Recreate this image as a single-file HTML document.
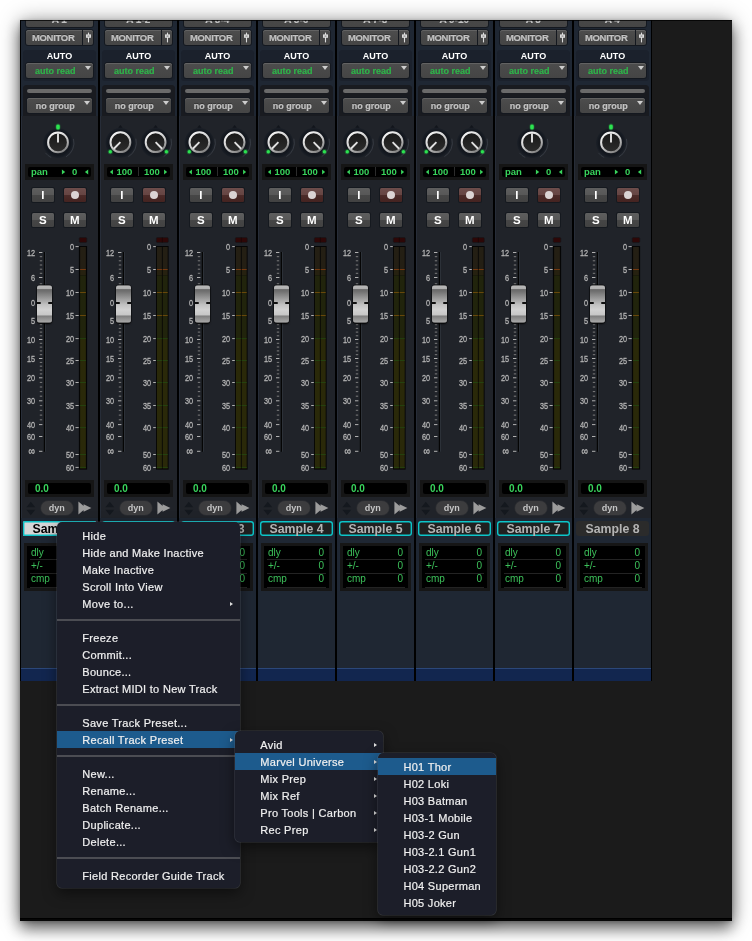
<!DOCTYPE html><html><head><meta charset="utf-8"><title>Mixer</title><style>

*{box-sizing:border-box;margin:0;padding:0}
html,body{width:752px;height:941px;background:#fff;overflow:hidden}
body{position:relative;font-family:"Liberation Sans",sans-serif;}
#panel{position:absolute;left:20px;top:20px;width:712px;height:901px;background:#1b1b1b;will-change:transform;
 box-shadow:0 1px 4px rgba(0,0,0,.2),0 0 20px rgba(0,0,0,.35),0 8px 14px rgba(0,0,0,.5);}
#panel .botline{position:absolute;left:0;right:0;bottom:0;height:3px;background:#060606;border-top:1px solid #000}
#clip{position:absolute;left:0;top:0;width:712px;height:901px;overflow:hidden}
.strip{position:absolute;top:0;width:79px;height:661px;background:#1f2733;}
.np{position:absolute;left:1px;top:96px;width:78px;height:401.5px;background:#202329;box-shadow:inset 1px 0 0 #272d38}
.strip .dv{position:absolute;left:-1px;top:0;width:2px;height:661px;background:#000;z-index:3}
.strip .bl{position:absolute;left:0;top:648px;width:79px;height:13px;background:#12264f;border-top:1px solid #2b4779}
.a{position:absolute}
.btn{position:absolute;background:linear-gradient(#4d4d4d,#484848 50%,#454545 100%);border-radius:2.5px;
 color:#c2c2c2;font-weight:bold;font-size:9px;text-align:center;white-space:nowrap;
 box-shadow:0 0 0 1px #14181f,inset 0 1px 0 #626262;text-shadow:0 -1px 0 rgba(0,0,0,.35);-webkit-text-stroke:.2px currentColor}
.sec{position:absolute;left:3.2px;width:72.6px;background:#1b212c;border-radius:3.5px}
.tri{position:absolute;width:0;height:0;border-left:3.1px solid transparent;border-right:3.1px solid transparent;border-top:4.1px solid #cdcdcd}
.disp{position:absolute;left:5px;width:69px;background:#151515;}
.disp i{position:absolute;left:3px;top:3px;right:3px;bottom:3px;background:#000;border-radius:2px;display:block}
.sq{position:absolute;width:22.7px;height:14.5px;border-radius:1.5px;background:linear-gradient(#5e5e5e 0,#585858 48%,#464646 52%,#424242 100%);
 box-shadow:0 0 0 1px #15191f;color:#fff;font-weight:bold;font-size:11.5px;text-align:center;line-height:14.6px}
.sq.rec{background:linear-gradient(#6d4d4b 0,#664543 48%,#4b2b29 52%,#452320 100%)}
.sq.rec b{position:absolute;left:7.4px;top:3px;width:8.2px;height:8.2px;border-radius:50%;background:#dbd4d4;display:block}
.lab{position:absolute;color:#b4b4b4;font-size:9.6px;line-height:10px;width:24px;white-space:nowrap;transform-origin:100% 50%;transform:scaleX(.76);text-align:right;-webkit-text-stroke:.3px #b4b4b4}
.name{position:absolute;left:3px;top:501px;width:73px;height:15px;box-shadow:inset 0 0 0 1.4px #0cc5c9;border-radius:3px;background:#202020;color:#b4b4b4;font-weight:bold;font-size:12.3px;line-height:16.6px;text-align:center;white-space:nowrap;overflow:hidden}
.dly{position:absolute;left:4px;top:523px;width:71px;height:48px;background:#161616}
.dly i{position:absolute;left:3px;top:3px;width:65px;height:42px;background:#000;display:block}
.dly span{position:absolute;font-size:10px;line-height:11px;color:#3cc05a}
.dly u{position:absolute;left:6px;width:59px;height:1px;background:#232323;display:block}
.menu{position:absolute;background:#1c1e29;border-radius:5px;box-shadow:0 0 0 .6px rgba(130,135,150,.3),0 5px 14px rgba(0,0,0,.5);color:#f0f0f0;font-size:11px;letter-spacing:.3px;-webkit-text-stroke:.2px #f0f0f0;z-index:10;padding:5px 0 4px;overflow:hidden}
.menu div{height:17px;line-height:18.6px;white-space:nowrap;position:relative}
.menu div.hl{background:#1d5b8d}
.menu div.sp:after{content:"";position:absolute;left:0;right:0;top:7px;height:2px;background:#4c4d53}
.menu div.ar:after{content:"";position:absolute;top:6.7px;width:0;height:0;border-top:2px solid transparent;border-bottom:2px solid transparent;border-left:3.5px solid #ddd}
.m1 div.ar:after{right:7px}.m2 div.ar:after{right:6.5px}
.gr{color:#38d45c;font-weight:bold;position:absolute;white-space:nowrap}

</style></head><body>
<svg width="0" height="0" style="position:absolute"><defs><radialGradient id="halo"><stop offset="0" stop-color="#10141a"/><stop offset="0.8" stop-color="#13171e"/><stop offset="0.93" stop-color="#181d25" stop-opacity=".8"/><stop offset="1" stop-color="#202329" stop-opacity="0"/></radialGradient><linearGradient id="kb" x1="0" y1="0" x2="0" y2="1"><stop offset="0" stop-color="#181818"/><stop offset="1" stop-color="#2c2c2c"/></linearGradient><linearGradient id="kr" x1="0.2" y1="0" x2="0.8" y2="1"><stop offset="0" stop-color="#f6f6f6"/><stop offset="0.55" stop-color="#c8c8c8"/><stop offset="1" stop-color="#7c7c7c"/></linearGradient></defs></svg>
<div id="panel"><div id="clip">
<div class="strip" style="left:0px"><div class="dv"></div>
<div class="btn" style="left:5.5px;top:-8px;width:67.5px;height:15px;line-height:16px;font-size:10px">A 1</div>
<div class="btn" style="left:5.5px;top:10px;width:57px;height:15px;line-height:15.2px;font-size:9.5px;letter-spacing:-.3px;padding-right:1.6px;border-radius:2.5px 0 0 2.5px">MONITOR</div>
<div class="btn" style="left:63px;top:10px;width:10px;height:15px;border-radius:0 2.5px 2.5px 0"><svg class="a" style="left:1.5px;top:2px" width="7" height="11" viewBox="0 0 7 11"><path d="M3.5 .6V10.4" stroke="#dcdcdc" stroke-width="1.1"/><rect x="1" y="2.4" width="5" height="3.4" fill="#dcdcdc"/><path d="M2.5 4.1H4.5" stroke="#555" stroke-width=".7"/></svg></div>
<div class="sec" style="top:30px;height:31px"></div>
<div class="a" style="left:0;top:30.6px;width:79px;text-align:center;color:#fff;font-weight:bold;font-size:9px;line-height:11px">AUTO</div>
<div class="btn" style="left:5.5px;top:43px;width:67.5px;height:15px;line-height:16.2px;padding-right:8px;color:#2fb34a;text-shadow:none">auto read<span class="tri" style="left:59.4px;top:3px"></span></div>
<div class="np"></div><div class="sec" style="top:65px;height:31px;background:#191b20;border-radius:3.5px 3.5px 0 0"></div>
<div class="a" style="left:7px;top:69px;width:65px;height:4px;border-radius:2px;background:#6a6a6a"></div>
<div class="btn" style="left:7px;top:78.2px;width:65px;height:15px;line-height:16.6px;padding-right:8.5px">no group<span class="tri" style="left:56.8px;top:3.1px"></span></div>
<svg class="a" style="left:0;top:100px" width="79" height="44" viewBox="0 100 79 44"><circle cx="38" cy="123.0" r="15.6" fill="url(#halo)"/><path d="M35.8 108.0L38 105.2L40.2 108.0Z" fill="#11151b"/><path d="M53.45 118.86A16 16 0 0 1 46.00 136.86" fill="none" stroke="#3b4049" stroke-width="1" opacity=".8"/><path d="M31.24 137.50A16 16 0 0 1 25.39 132.85" fill="none" stroke="#3b4049" stroke-width="1" opacity=".7"/><circle cx="38" cy="122.4" r="9.9" fill="url(#kb)" stroke="url(#kr)" stroke-width="2"/><line x1="38" y1="122.4" x2="38.00" y2="113.20" stroke="#e2e2e2" stroke-width="1.9"/><rect x="35.4" y="103.6" width="5.2" height="6.8" rx="2.4" fill="#25e04a" opacity=".25"/><rect x="36.2" y="104.4" width="3.6" height="5.2" rx="1.7" fill="#2ce350"/></svg>
<div class="disp" style="top:144px;height:16px"><i></i></div>
<div class="gr" style="left:11px;font-size:9.5px;line-height:11px;top:145.8px">pan</div><div class="gr" style="left:52px;font-size:9.5px;line-height:11px;top:145.8px">0</div>
<svg class="a" style="left:40px;top:148.5px" width="30" height="6"><path d="M5.2 3L1.9 .5V5.5Z M24.9 3L28.2 .5V5.5Z" fill="#38d45c"/></svg>
<div class="sq" style="left:11.5px;top:167.8px">I</div><div class="sq rec" style="left:43.5px;top:167.8px"><b></b></div>
<div class="sq" style="left:11.5px;top:192.8px">S</div><div class="sq" style="left:43.5px;top:192.8px">M</div>
<div class="lab" style="left:-8.8px;top:227.8px">12</div>
<div class="lab" style="left:-8.8px;top:252.8px">6</div>
<div class="lab" style="left:-8.8px;top:277.8px">0</div>
<div class="lab" style="left:-8.8px;top:296.3px">5</div>
<div class="lab" style="left:-8.8px;top:314.8px">10</div>
<div class="lab" style="left:-8.8px;top:333.8px">15</div>
<div class="lab" style="left:-8.8px;top:353.1px">20</div>
<div class="lab" style="left:-8.8px;top:376.1px">30</div>
<div class="lab" style="left:-8.8px;top:399.90000000000003px">40</div>
<div class="lab" style="left:-8.8px;top:411.8px">60</div>
<div class="lab" style="left:-8.8px;top:426px;font-size:12px">∞</div>
<div class="lab" style="left:30.200000000000003px;top:221.9px">0</div>
<div class="lab" style="left:30.200000000000003px;top:244.8px">5</div>
<div class="lab" style="left:30.200000000000003px;top:267.8px">10</div>
<div class="lab" style="left:30.200000000000003px;top:290.8px">15</div>
<div class="lab" style="left:30.200000000000003px;top:313.90000000000003px">20</div>
<div class="lab" style="left:30.200000000000003px;top:335.8px">25</div>
<div class="lab" style="left:30.200000000000003px;top:357.8px">30</div>
<div class="lab" style="left:30.200000000000003px;top:380.8px">35</div>
<div class="lab" style="left:30.200000000000003px;top:402.90000000000003px">40</div>
<div class="lab" style="left:30.200000000000003px;top:429.8px">50</div>
<div class="lab" style="left:30.200000000000003px;top:442.7px">60</div>
<svg class="a" style="left:0;top:214px" width="79" height="240" viewBox="0 214 79 240"><path d="M19 232.5h3.4M19 257.5h3.4M19 282.5h3.4M19 301h3.4M19 319.5h3.4M19 338.5h3.4M19 357.8h3.4M19 380.8h3.4M19 404.6h3.4M19 416.5h3.4M19 431.3h3.4M55.5 226.6H58.8M55.5 249.5H58.8M55.5 272.5H58.8M55.5 295.5H58.8M55.5 318.6H58.8M55.5 340.5H58.8M55.5 362.5H58.8M55.5 385.5H58.8M55.5 407.6H58.8M55.5 434.5H58.8M55.5 447.4H58.8" stroke="#b0b0b0" stroke-width="1"/><path d="M19.8 236.7h2.4M19.8 240.8h2.4M19.8 245.0h2.4M19.8 249.2h2.4M19.8 253.3h2.4M19.8 263.8h2.4M19.8 270.0h2.4M19.8 276.2h2.4M19.8 287.1h2.4M19.8 291.8h2.4M19.8 296.4h2.4M19.8 304.7h2.4M19.8 308.4h2.4M19.8 312.1h2.4M19.8 315.8h2.4M19.8 323.3h2.4M19.8 327.1h2.4M19.8 330.9h2.4M19.8 334.7h2.4M19.8 342.4h2.4M19.8 346.2h2.4M19.8 350.1h2.4M19.8 353.9h2.4M19.8 362.4h2.4M19.8 367.0h2.4M19.8 371.6h2.4M19.8 376.2h2.4M19.8 385.6h2.4M19.8 390.3h2.4M19.8 395.1h2.4M19.8 399.8h2.4" stroke="#7d7d7d" stroke-width="1"/><rect x="23.8" y="232" width="1.4" height="199.7" fill="#050505"/><rect x="25.2" y="232" width=".6" height="199.7" fill="#3a4048"/><rect x="59.2" y="217.5" width="7.6" height="5" rx="1.3" fill="#2d0707" stroke="#14161a" stroke-width=".6"/><rect x="58.900000000000006" y="226" width="8.2" height="223.6" fill="#050505"/><rect x="60.1" y="227" width="5.8" height="23" fill="#241f14"/><rect x="60.1" y="250" width="5.8" height="5.5" fill="#262110"/><rect x="60.1" y="255.5" width="5.8" height="63" fill="#21240c"/><rect x="60.1" y="318.5" width="5.8" height="130" fill="#2a2909"/><path d="M60.1 249.5h5.8" stroke="#74380f" stroke-width="1"/><path d="M60.1 272.5h5.8M60.1 295.5h5.8" stroke="#68470a" stroke-width="1"/><path d="M60.1 318.6h5.8M60.1 340.5h5.8M60.1 362.5h5.8M60.1 385.5h5.8M60.1 407.6h5.8M60.1 434.5h5.8M60.1 447.4h5.8" stroke="#24420f" stroke-width="1"/></svg>
<div class="a" style="left:16.6px;top:264.5px;width:15.6px;height:38.7px;border-radius:3px;background:linear-gradient(#3a3a3a 0,#b8b8b8 3%,#b0b0b0 10%,#727272 11.5%,#6c6c6c 15%,#a6a6a6 40%,#b2b2b2 46%,#c2c2c2 52%,#d2d2d2 65%,#c6c6c6 79.5%,#7c7c7c 81%,#8a8a8a 86%,#a4a4a4 96.5%,#444 100%);box-shadow:0 1px 2px rgba(0,0,0,.8),0 0 0 .6px rgba(0,0,0,.55)"><div class="a" style="left:0;top:17px;width:4.6px;height:2px;background:#101010;border-radius:0 1px 1px 0"></div><div class="a" style="right:0;top:17px;width:4.6px;height:2px;background:#101010;border-radius:1px 0 0 1px"></div></div>
<div class="disp" style="top:460px;height:17px"><i></i></div>
<div class="gr" style="left:15px;top:463px;font-size:10px;line-height:11px">0.0</div>
<svg class="a" style="left:5.5px;top:481px" width="10" height="15"><path d="M4.8 .8L9.2 6.2H.4Z M4.8 14.2L9.2 8.8H.4Z" fill="#14181e"/></svg>
<div class="a" style="left:20.5px;top:481px;width:32.5px;height:13.5px;border-radius:7px;background:#3c3c3e;box-shadow:0 0 0 .7px #2a2c30;color:#c6c6c6;font-weight:bold;font-size:9px;line-height:14px;text-align:center">dyn</div>
<svg class="a" style="left:57.5px;top:481px" width="14" height="14"><path d="M.4 .4L8 7L.4 13.6Z M5.6 3.2L13.4 7L5.6 10.8Z" fill="#9c9c9c"/></svg>
<div class="name" style="background:#d6d6d6;color:#000;border-radius:1.5px">Sample 1</div>
<div class="dly"><i></i><span style="left:7px;top:3.7px">dly</span><span style="right:8px;top:3.7px">0</span><u style="top:15.5px"></u><span style="left:7px;top:16.7px">+/-</span><span style="right:8px;top:16.7px">0</span><u style="top:29.5px"></u><span style="left:7px;top:29.7px">cmp</span><span style="right:8px;top:29.7px">0</span><u style="top:43.5px"></u></div>
<div class="bl"></div></div>
<div class="strip" style="left:79px"><div class="dv"></div>
<div class="btn" style="left:5.5px;top:-8px;width:67.5px;height:15px;line-height:16px;font-size:10px">A 1-2</div>
<div class="btn" style="left:5.5px;top:10px;width:57px;height:15px;line-height:15.2px;font-size:9.5px;letter-spacing:-.3px;padding-right:1.6px;border-radius:2.5px 0 0 2.5px">MONITOR</div>
<div class="btn" style="left:63px;top:10px;width:10px;height:15px;border-radius:0 2.5px 2.5px 0"><svg class="a" style="left:1.5px;top:2px" width="7" height="11" viewBox="0 0 7 11"><path d="M3.5 .6V10.4" stroke="#dcdcdc" stroke-width="1.1"/><rect x="1" y="2.4" width="5" height="3.4" fill="#dcdcdc"/><path d="M2.5 4.1H4.5" stroke="#555" stroke-width=".7"/></svg></div>
<div class="sec" style="top:30px;height:31px"></div>
<div class="a" style="left:0;top:30.6px;width:79px;text-align:center;color:#fff;font-weight:bold;font-size:9px;line-height:11px">AUTO</div>
<div class="btn" style="left:5.5px;top:43px;width:67.5px;height:15px;line-height:16.2px;padding-right:8px;color:#2fb34a;text-shadow:none">auto read<span class="tri" style="left:59.4px;top:3px"></span></div>
<div class="np"></div><div class="sec" style="top:65px;height:31px;background:#191b20;border-radius:3.5px 3.5px 0 0"></div>
<div class="a" style="left:7px;top:69px;width:65px;height:4px;border-radius:2px;background:#6a6a6a"></div>
<div class="btn" style="left:7px;top:78.2px;width:65px;height:15px;line-height:16.6px;padding-right:8.5px">no group<span class="tri" style="left:56.8px;top:3.1px"></span></div>
<svg class="a" style="left:0;top:100px" width="79" height="44" viewBox="0 100 79 44"><circle cx="21.4" cy="122.8" r="15.6" fill="url(#halo)"/><path d="M19.2 107.8L21.4 105.0L23.599999999999998 107.8Z" fill="#11151b"/><path d="M36.85 118.66A16 16 0 0 1 29.40 136.66" fill="none" stroke="#3b4049" stroke-width="1" opacity=".8"/><circle cx="21.4" cy="122.2" r="9.9" fill="url(#kb)" stroke="url(#kr)" stroke-width="2"/><line x1="21.4" y1="122.2" x2="14.89" y2="128.71" stroke="#e2e2e2" stroke-width="1.9"/><circle cx="56.6" cy="122.8" r="15.6" fill="url(#halo)"/><path d="M54.4 107.8L56.6 105.0L58.800000000000004 107.8Z" fill="#11151b"/><path d="M72.05 118.66A16 16 0 0 1 64.60 136.66" fill="none" stroke="#3b4049" stroke-width="1" opacity=".8"/><circle cx="56.6" cy="122.2" r="9.9" fill="url(#kb)" stroke="url(#kr)" stroke-width="2"/><line x1="56.6" y1="122.2" x2="63.11" y2="128.71" stroke="#e2e2e2" stroke-width="1.9"/><circle cx="11.3" cy="131.7" r="2.6" fill="#25e04a" opacity=".25"/><circle cx="67.4" cy="131.7" r="2.6" fill="#25e04a" opacity=".25"/><circle cx="11.3" cy="131.7" r="1.7" fill="#2ce350"/><circle cx="67.4" cy="131.7" r="1.7" fill="#2ce350"/></svg>
<div class="disp" style="top:144px;height:16px"><i></i></div>
<div class="gr" style="left:17.5px;font-size:9.5px;line-height:11px;top:145.8px">100</div><div class="gr" style="left:45px;font-size:9.5px;line-height:11px;top:145.8px">100</div>
<div class="a" style="left:39px;top:147px;width:1px;height:9px;background:#2c2c2c"></div>
<svg class="a" style="left:10px;top:148.5px" width="60" height="6"><path d="M.9 3L3.9 .6V5.4Z M58.1 3L55.1 .6V5.4Z" fill="#38d45c"/></svg>
<div class="sq" style="left:11.5px;top:167.8px">I</div><div class="sq rec" style="left:43.5px;top:167.8px"><b></b></div>
<div class="sq" style="left:11.5px;top:192.8px">S</div><div class="sq" style="left:43.5px;top:192.8px">M</div>
<div class="lab" style="left:-8.8px;top:227.8px">12</div>
<div class="lab" style="left:-8.8px;top:252.8px">6</div>
<div class="lab" style="left:-8.8px;top:277.8px">0</div>
<div class="lab" style="left:-8.8px;top:296.3px">5</div>
<div class="lab" style="left:-8.8px;top:314.8px">10</div>
<div class="lab" style="left:-8.8px;top:333.8px">15</div>
<div class="lab" style="left:-8.8px;top:353.1px">20</div>
<div class="lab" style="left:-8.8px;top:376.1px">30</div>
<div class="lab" style="left:-8.8px;top:399.90000000000003px">40</div>
<div class="lab" style="left:-8.8px;top:411.8px">60</div>
<div class="lab" style="left:-8.8px;top:426px;font-size:12px">∞</div>
<div class="lab" style="left:28.200000000000003px;top:221.9px">0</div>
<div class="lab" style="left:28.200000000000003px;top:244.8px">5</div>
<div class="lab" style="left:28.200000000000003px;top:267.8px">10</div>
<div class="lab" style="left:28.200000000000003px;top:290.8px">15</div>
<div class="lab" style="left:28.200000000000003px;top:313.90000000000003px">20</div>
<div class="lab" style="left:28.200000000000003px;top:335.8px">25</div>
<div class="lab" style="left:28.200000000000003px;top:357.8px">30</div>
<div class="lab" style="left:28.200000000000003px;top:380.8px">35</div>
<div class="lab" style="left:28.200000000000003px;top:402.90000000000003px">40</div>
<div class="lab" style="left:28.200000000000003px;top:429.8px">50</div>
<div class="lab" style="left:28.200000000000003px;top:442.7px">60</div>
<svg class="a" style="left:0;top:214px" width="79" height="240" viewBox="0 214 79 240"><path d="M19 232.5h3.4M19 257.5h3.4M19 282.5h3.4M19 301h3.4M19 319.5h3.4M19 338.5h3.4M19 357.8h3.4M19 380.8h3.4M19 404.6h3.4M19 416.5h3.4M19 431.3h3.4M54.2 226.6H56.8M54.2 249.5H56.8M54.2 272.5H56.8M54.2 295.5H56.8M54.2 318.6H56.8M54.2 340.5H56.8M54.2 362.5H56.8M54.2 385.5H56.8M54.2 407.6H56.8M54.2 434.5H56.8M54.2 447.4H56.8" stroke="#b0b0b0" stroke-width="1"/><path d="M19.8 236.7h2.4M19.8 240.8h2.4M19.8 245.0h2.4M19.8 249.2h2.4M19.8 253.3h2.4M19.8 263.8h2.4M19.8 270.0h2.4M19.8 276.2h2.4M19.8 287.1h2.4M19.8 291.8h2.4M19.8 296.4h2.4M19.8 304.7h2.4M19.8 308.4h2.4M19.8 312.1h2.4M19.8 315.8h2.4M19.8 323.3h2.4M19.8 327.1h2.4M19.8 330.9h2.4M19.8 334.7h2.4M19.8 342.4h2.4M19.8 346.2h2.4M19.8 350.1h2.4M19.8 353.9h2.4M19.8 362.4h2.4M19.8 367.0h2.4M19.8 371.6h2.4M19.8 376.2h2.4M19.8 385.6h2.4M19.8 390.3h2.4M19.8 395.1h2.4M19.8 399.8h2.4" stroke="#7d7d7d" stroke-width="1"/><rect x="23.8" y="232" width="1.4" height="199.7" fill="#050505"/><rect x="25.2" y="232" width=".6" height="199.7" fill="#3a4048"/><rect x="57.3" y="217.5" width="12" height="5" rx="1.3" fill="#2d0707" stroke="#14161a" stroke-width=".6"/><rect x="62.9" y="217.5" width=".8" height="5" fill="#180606"/><rect x="57.0" y="226" width="12.6" height="223.6" fill="#050505"/><rect x="57.9" y="227" width="5.0" height="23" fill="#241f14"/><rect x="57.9" y="250" width="5.0" height="5.5" fill="#262110"/><rect x="57.9" y="255.5" width="5.0" height="63" fill="#21240c"/><rect x="57.9" y="318.5" width="5.0" height="130" fill="#2a2909"/><path d="M57.9 249.5h5.0" stroke="#74380f" stroke-width="1"/><path d="M57.9 272.5h5.0M57.9 295.5h5.0" stroke="#68470a" stroke-width="1"/><path d="M57.9 318.6h5.0M57.9 340.5h5.0M57.9 362.5h5.0M57.9 385.5h5.0M57.9 407.6h5.0M57.9 434.5h5.0M57.9 447.4h5.0" stroke="#24420f" stroke-width="1"/><rect x="63.699999999999996" y="227" width="5.0" height="23" fill="#241f14"/><rect x="63.699999999999996" y="250" width="5.0" height="5.5" fill="#262110"/><rect x="63.699999999999996" y="255.5" width="5.0" height="63" fill="#21240c"/><rect x="63.699999999999996" y="318.5" width="5.0" height="130" fill="#2a2909"/><path d="M63.699999999999996 249.5h5.0" stroke="#74380f" stroke-width="1"/><path d="M63.699999999999996 272.5h5.0M63.699999999999996 295.5h5.0" stroke="#68470a" stroke-width="1"/><path d="M63.699999999999996 318.6h5.0M63.699999999999996 340.5h5.0M63.699999999999996 362.5h5.0M63.699999999999996 385.5h5.0M63.699999999999996 407.6h5.0M63.699999999999996 434.5h5.0M63.699999999999996 447.4h5.0" stroke="#24420f" stroke-width="1"/></svg>
<div class="a" style="left:16.6px;top:264.5px;width:15.6px;height:38.7px;border-radius:3px;background:linear-gradient(#3a3a3a 0,#b8b8b8 3%,#b0b0b0 10%,#727272 11.5%,#6c6c6c 15%,#a6a6a6 40%,#b2b2b2 46%,#c2c2c2 52%,#d2d2d2 65%,#c6c6c6 79.5%,#7c7c7c 81%,#8a8a8a 86%,#a4a4a4 96.5%,#444 100%);box-shadow:0 1px 2px rgba(0,0,0,.8),0 0 0 .6px rgba(0,0,0,.55)"><div class="a" style="left:0;top:17px;width:4.6px;height:2px;background:#101010;border-radius:0 1px 1px 0"></div><div class="a" style="right:0;top:17px;width:4.6px;height:2px;background:#101010;border-radius:1px 0 0 1px"></div></div>
<div class="disp" style="top:460px;height:17px"><i></i></div>
<div class="gr" style="left:15px;top:463px;font-size:10px;line-height:11px">0.0</div>
<svg class="a" style="left:5.5px;top:481px" width="10" height="15"><path d="M4.8 .8L9.2 6.2H.4Z M4.8 14.2L9.2 8.8H.4Z" fill="#14181e"/></svg>
<div class="a" style="left:20.5px;top:481px;width:32.5px;height:13.5px;border-radius:7px;background:#3c3c3e;box-shadow:0 0 0 .7px #2a2c30;color:#c6c6c6;font-weight:bold;font-size:9px;line-height:14px;text-align:center">dyn</div>
<svg class="a" style="left:57.5px;top:481px" width="14" height="14"><path d="M.4 .4L8 7L.4 13.6Z M5.6 3.2L13.4 7L5.6 10.8Z" fill="#9c9c9c"/></svg>
<div class="name">Sample 2</div>
<div class="dly"><i></i><span style="left:7px;top:3.7px">dly</span><span style="right:8px;top:3.7px">0</span><u style="top:15.5px"></u><span style="left:7px;top:16.7px">+/-</span><span style="right:8px;top:16.7px">0</span><u style="top:29.5px"></u><span style="left:7px;top:29.7px">cmp</span><span style="right:8px;top:29.7px">0</span><u style="top:43.5px"></u></div>
<div class="bl"></div></div>
<div class="strip" style="left:158px"><div class="dv"></div>
<div class="btn" style="left:5.5px;top:-8px;width:67.5px;height:15px;line-height:16px;font-size:10px">A 3-4</div>
<div class="btn" style="left:5.5px;top:10px;width:57px;height:15px;line-height:15.2px;font-size:9.5px;letter-spacing:-.3px;padding-right:1.6px;border-radius:2.5px 0 0 2.5px">MONITOR</div>
<div class="btn" style="left:63px;top:10px;width:10px;height:15px;border-radius:0 2.5px 2.5px 0"><svg class="a" style="left:1.5px;top:2px" width="7" height="11" viewBox="0 0 7 11"><path d="M3.5 .6V10.4" stroke="#dcdcdc" stroke-width="1.1"/><rect x="1" y="2.4" width="5" height="3.4" fill="#dcdcdc"/><path d="M2.5 4.1H4.5" stroke="#555" stroke-width=".7"/></svg></div>
<div class="sec" style="top:30px;height:31px"></div>
<div class="a" style="left:0;top:30.6px;width:79px;text-align:center;color:#fff;font-weight:bold;font-size:9px;line-height:11px">AUTO</div>
<div class="btn" style="left:5.5px;top:43px;width:67.5px;height:15px;line-height:16.2px;padding-right:8px;color:#2fb34a;text-shadow:none">auto read<span class="tri" style="left:59.4px;top:3px"></span></div>
<div class="np"></div><div class="sec" style="top:65px;height:31px;background:#191b20;border-radius:3.5px 3.5px 0 0"></div>
<div class="a" style="left:7px;top:69px;width:65px;height:4px;border-radius:2px;background:#6a6a6a"></div>
<div class="btn" style="left:7px;top:78.2px;width:65px;height:15px;line-height:16.6px;padding-right:8.5px">no group<span class="tri" style="left:56.8px;top:3.1px"></span></div>
<svg class="a" style="left:0;top:100px" width="79" height="44" viewBox="0 100 79 44"><circle cx="21.4" cy="122.8" r="15.6" fill="url(#halo)"/><path d="M19.2 107.8L21.4 105.0L23.599999999999998 107.8Z" fill="#11151b"/><path d="M36.85 118.66A16 16 0 0 1 29.40 136.66" fill="none" stroke="#3b4049" stroke-width="1" opacity=".8"/><circle cx="21.4" cy="122.2" r="9.9" fill="url(#kb)" stroke="url(#kr)" stroke-width="2"/><line x1="21.4" y1="122.2" x2="14.89" y2="128.71" stroke="#e2e2e2" stroke-width="1.9"/><circle cx="56.6" cy="122.8" r="15.6" fill="url(#halo)"/><path d="M54.4 107.8L56.6 105.0L58.800000000000004 107.8Z" fill="#11151b"/><path d="M72.05 118.66A16 16 0 0 1 64.60 136.66" fill="none" stroke="#3b4049" stroke-width="1" opacity=".8"/><circle cx="56.6" cy="122.2" r="9.9" fill="url(#kb)" stroke="url(#kr)" stroke-width="2"/><line x1="56.6" y1="122.2" x2="63.11" y2="128.71" stroke="#e2e2e2" stroke-width="1.9"/><circle cx="11.3" cy="131.7" r="2.6" fill="#25e04a" opacity=".25"/><circle cx="67.4" cy="131.7" r="2.6" fill="#25e04a" opacity=".25"/><circle cx="11.3" cy="131.7" r="1.7" fill="#2ce350"/><circle cx="67.4" cy="131.7" r="1.7" fill="#2ce350"/></svg>
<div class="disp" style="top:144px;height:16px"><i></i></div>
<div class="gr" style="left:17.5px;font-size:9.5px;line-height:11px;top:145.8px">100</div><div class="gr" style="left:45px;font-size:9.5px;line-height:11px;top:145.8px">100</div>
<div class="a" style="left:39px;top:147px;width:1px;height:9px;background:#2c2c2c"></div>
<svg class="a" style="left:10px;top:148.5px" width="60" height="6"><path d="M.9 3L3.9 .6V5.4Z M58.1 3L55.1 .6V5.4Z" fill="#38d45c"/></svg>
<div class="sq" style="left:11.5px;top:167.8px">I</div><div class="sq rec" style="left:43.5px;top:167.8px"><b></b></div>
<div class="sq" style="left:11.5px;top:192.8px">S</div><div class="sq" style="left:43.5px;top:192.8px">M</div>
<div class="lab" style="left:-8.8px;top:227.8px">12</div>
<div class="lab" style="left:-8.8px;top:252.8px">6</div>
<div class="lab" style="left:-8.8px;top:277.8px">0</div>
<div class="lab" style="left:-8.8px;top:296.3px">5</div>
<div class="lab" style="left:-8.8px;top:314.8px">10</div>
<div class="lab" style="left:-8.8px;top:333.8px">15</div>
<div class="lab" style="left:-8.8px;top:353.1px">20</div>
<div class="lab" style="left:-8.8px;top:376.1px">30</div>
<div class="lab" style="left:-8.8px;top:399.90000000000003px">40</div>
<div class="lab" style="left:-8.8px;top:411.8px">60</div>
<div class="lab" style="left:-8.8px;top:426px;font-size:12px">∞</div>
<div class="lab" style="left:28.200000000000003px;top:221.9px">0</div>
<div class="lab" style="left:28.200000000000003px;top:244.8px">5</div>
<div class="lab" style="left:28.200000000000003px;top:267.8px">10</div>
<div class="lab" style="left:28.200000000000003px;top:290.8px">15</div>
<div class="lab" style="left:28.200000000000003px;top:313.90000000000003px">20</div>
<div class="lab" style="left:28.200000000000003px;top:335.8px">25</div>
<div class="lab" style="left:28.200000000000003px;top:357.8px">30</div>
<div class="lab" style="left:28.200000000000003px;top:380.8px">35</div>
<div class="lab" style="left:28.200000000000003px;top:402.90000000000003px">40</div>
<div class="lab" style="left:28.200000000000003px;top:429.8px">50</div>
<div class="lab" style="left:28.200000000000003px;top:442.7px">60</div>
<svg class="a" style="left:0;top:214px" width="79" height="240" viewBox="0 214 79 240"><path d="M19 232.5h3.4M19 257.5h3.4M19 282.5h3.4M19 301h3.4M19 319.5h3.4M19 338.5h3.4M19 357.8h3.4M19 380.8h3.4M19 404.6h3.4M19 416.5h3.4M19 431.3h3.4M54.2 226.6H56.8M54.2 249.5H56.8M54.2 272.5H56.8M54.2 295.5H56.8M54.2 318.6H56.8M54.2 340.5H56.8M54.2 362.5H56.8M54.2 385.5H56.8M54.2 407.6H56.8M54.2 434.5H56.8M54.2 447.4H56.8" stroke="#b0b0b0" stroke-width="1"/><path d="M19.8 236.7h2.4M19.8 240.8h2.4M19.8 245.0h2.4M19.8 249.2h2.4M19.8 253.3h2.4M19.8 263.8h2.4M19.8 270.0h2.4M19.8 276.2h2.4M19.8 287.1h2.4M19.8 291.8h2.4M19.8 296.4h2.4M19.8 304.7h2.4M19.8 308.4h2.4M19.8 312.1h2.4M19.8 315.8h2.4M19.8 323.3h2.4M19.8 327.1h2.4M19.8 330.9h2.4M19.8 334.7h2.4M19.8 342.4h2.4M19.8 346.2h2.4M19.8 350.1h2.4M19.8 353.9h2.4M19.8 362.4h2.4M19.8 367.0h2.4M19.8 371.6h2.4M19.8 376.2h2.4M19.8 385.6h2.4M19.8 390.3h2.4M19.8 395.1h2.4M19.8 399.8h2.4" stroke="#7d7d7d" stroke-width="1"/><rect x="23.8" y="232" width="1.4" height="199.7" fill="#050505"/><rect x="25.2" y="232" width=".6" height="199.7" fill="#3a4048"/><rect x="57.3" y="217.5" width="12" height="5" rx="1.3" fill="#2d0707" stroke="#14161a" stroke-width=".6"/><rect x="62.9" y="217.5" width=".8" height="5" fill="#180606"/><rect x="57.0" y="226" width="12.6" height="223.6" fill="#050505"/><rect x="57.9" y="227" width="5.0" height="23" fill="#241f14"/><rect x="57.9" y="250" width="5.0" height="5.5" fill="#262110"/><rect x="57.9" y="255.5" width="5.0" height="63" fill="#21240c"/><rect x="57.9" y="318.5" width="5.0" height="130" fill="#2a2909"/><path d="M57.9 249.5h5.0" stroke="#74380f" stroke-width="1"/><path d="M57.9 272.5h5.0M57.9 295.5h5.0" stroke="#68470a" stroke-width="1"/><path d="M57.9 318.6h5.0M57.9 340.5h5.0M57.9 362.5h5.0M57.9 385.5h5.0M57.9 407.6h5.0M57.9 434.5h5.0M57.9 447.4h5.0" stroke="#24420f" stroke-width="1"/><rect x="63.699999999999996" y="227" width="5.0" height="23" fill="#241f14"/><rect x="63.699999999999996" y="250" width="5.0" height="5.5" fill="#262110"/><rect x="63.699999999999996" y="255.5" width="5.0" height="63" fill="#21240c"/><rect x="63.699999999999996" y="318.5" width="5.0" height="130" fill="#2a2909"/><path d="M63.699999999999996 249.5h5.0" stroke="#74380f" stroke-width="1"/><path d="M63.699999999999996 272.5h5.0M63.699999999999996 295.5h5.0" stroke="#68470a" stroke-width="1"/><path d="M63.699999999999996 318.6h5.0M63.699999999999996 340.5h5.0M63.699999999999996 362.5h5.0M63.699999999999996 385.5h5.0M63.699999999999996 407.6h5.0M63.699999999999996 434.5h5.0M63.699999999999996 447.4h5.0" stroke="#24420f" stroke-width="1"/></svg>
<div class="a" style="left:16.6px;top:264.5px;width:15.6px;height:38.7px;border-radius:3px;background:linear-gradient(#3a3a3a 0,#b8b8b8 3%,#b0b0b0 10%,#727272 11.5%,#6c6c6c 15%,#a6a6a6 40%,#b2b2b2 46%,#c2c2c2 52%,#d2d2d2 65%,#c6c6c6 79.5%,#7c7c7c 81%,#8a8a8a 86%,#a4a4a4 96.5%,#444 100%);box-shadow:0 1px 2px rgba(0,0,0,.8),0 0 0 .6px rgba(0,0,0,.55)"><div class="a" style="left:0;top:17px;width:4.6px;height:2px;background:#101010;border-radius:0 1px 1px 0"></div><div class="a" style="right:0;top:17px;width:4.6px;height:2px;background:#101010;border-radius:1px 0 0 1px"></div></div>
<div class="disp" style="top:460px;height:17px"><i></i></div>
<div class="gr" style="left:15px;top:463px;font-size:10px;line-height:11px">0.0</div>
<svg class="a" style="left:5.5px;top:481px" width="10" height="15"><path d="M4.8 .8L9.2 6.2H.4Z M4.8 14.2L9.2 8.8H.4Z" fill="#14181e"/></svg>
<div class="a" style="left:20.5px;top:481px;width:32.5px;height:13.5px;border-radius:7px;background:#3c3c3e;box-shadow:0 0 0 .7px #2a2c30;color:#c6c6c6;font-weight:bold;font-size:9px;line-height:14px;text-align:center">dyn</div>
<svg class="a" style="left:57.5px;top:481px" width="14" height="14"><path d="M.4 .4L8 7L.4 13.6Z M5.6 3.2L13.4 7L5.6 10.8Z" fill="#9c9c9c"/></svg>
<div class="name">Sample 3</div>
<div class="dly"><i></i><span style="left:7px;top:3.7px">dly</span><span style="right:8px;top:3.7px">0</span><u style="top:15.5px"></u><span style="left:7px;top:16.7px">+/-</span><span style="right:8px;top:16.7px">0</span><u style="top:29.5px"></u><span style="left:7px;top:29.7px">cmp</span><span style="right:8px;top:29.7px">0</span><u style="top:43.5px"></u></div>
<div class="bl"></div></div>
<div class="strip" style="left:237px"><div class="dv"></div>
<div class="btn" style="left:5.5px;top:-8px;width:67.5px;height:15px;line-height:16px;font-size:10px">A 5-6</div>
<div class="btn" style="left:5.5px;top:10px;width:57px;height:15px;line-height:15.2px;font-size:9.5px;letter-spacing:-.3px;padding-right:1.6px;border-radius:2.5px 0 0 2.5px">MONITOR</div>
<div class="btn" style="left:63px;top:10px;width:10px;height:15px;border-radius:0 2.5px 2.5px 0"><svg class="a" style="left:1.5px;top:2px" width="7" height="11" viewBox="0 0 7 11"><path d="M3.5 .6V10.4" stroke="#dcdcdc" stroke-width="1.1"/><rect x="1" y="2.4" width="5" height="3.4" fill="#dcdcdc"/><path d="M2.5 4.1H4.5" stroke="#555" stroke-width=".7"/></svg></div>
<div class="sec" style="top:30px;height:31px"></div>
<div class="a" style="left:0;top:30.6px;width:79px;text-align:center;color:#fff;font-weight:bold;font-size:9px;line-height:11px">AUTO</div>
<div class="btn" style="left:5.5px;top:43px;width:67.5px;height:15px;line-height:16.2px;padding-right:8px;color:#2fb34a;text-shadow:none">auto read<span class="tri" style="left:59.4px;top:3px"></span></div>
<div class="np"></div><div class="sec" style="top:65px;height:31px;background:#191b20;border-radius:3.5px 3.5px 0 0"></div>
<div class="a" style="left:7px;top:69px;width:65px;height:4px;border-radius:2px;background:#6a6a6a"></div>
<div class="btn" style="left:7px;top:78.2px;width:65px;height:15px;line-height:16.6px;padding-right:8.5px">no group<span class="tri" style="left:56.8px;top:3.1px"></span></div>
<svg class="a" style="left:0;top:100px" width="79" height="44" viewBox="0 100 79 44"><circle cx="21.4" cy="122.8" r="15.6" fill="url(#halo)"/><path d="M19.2 107.8L21.4 105.0L23.599999999999998 107.8Z" fill="#11151b"/><path d="M36.85 118.66A16 16 0 0 1 29.40 136.66" fill="none" stroke="#3b4049" stroke-width="1" opacity=".8"/><circle cx="21.4" cy="122.2" r="9.9" fill="url(#kb)" stroke="url(#kr)" stroke-width="2"/><line x1="21.4" y1="122.2" x2="14.89" y2="128.71" stroke="#e2e2e2" stroke-width="1.9"/><circle cx="56.6" cy="122.8" r="15.6" fill="url(#halo)"/><path d="M54.4 107.8L56.6 105.0L58.800000000000004 107.8Z" fill="#11151b"/><path d="M72.05 118.66A16 16 0 0 1 64.60 136.66" fill="none" stroke="#3b4049" stroke-width="1" opacity=".8"/><circle cx="56.6" cy="122.2" r="9.9" fill="url(#kb)" stroke="url(#kr)" stroke-width="2"/><line x1="56.6" y1="122.2" x2="63.11" y2="128.71" stroke="#e2e2e2" stroke-width="1.9"/><circle cx="11.3" cy="131.7" r="2.6" fill="#25e04a" opacity=".25"/><circle cx="67.4" cy="131.7" r="2.6" fill="#25e04a" opacity=".25"/><circle cx="11.3" cy="131.7" r="1.7" fill="#2ce350"/><circle cx="67.4" cy="131.7" r="1.7" fill="#2ce350"/></svg>
<div class="disp" style="top:144px;height:16px"><i></i></div>
<div class="gr" style="left:17.5px;font-size:9.5px;line-height:11px;top:145.8px">100</div><div class="gr" style="left:45px;font-size:9.5px;line-height:11px;top:145.8px">100</div>
<div class="a" style="left:39px;top:147px;width:1px;height:9px;background:#2c2c2c"></div>
<svg class="a" style="left:10px;top:148.5px" width="60" height="6"><path d="M.9 3L3.9 .6V5.4Z M58.1 3L55.1 .6V5.4Z" fill="#38d45c"/></svg>
<div class="sq" style="left:11.5px;top:167.8px">I</div><div class="sq rec" style="left:43.5px;top:167.8px"><b></b></div>
<div class="sq" style="left:11.5px;top:192.8px">S</div><div class="sq" style="left:43.5px;top:192.8px">M</div>
<div class="lab" style="left:-8.8px;top:227.8px">12</div>
<div class="lab" style="left:-8.8px;top:252.8px">6</div>
<div class="lab" style="left:-8.8px;top:277.8px">0</div>
<div class="lab" style="left:-8.8px;top:296.3px">5</div>
<div class="lab" style="left:-8.8px;top:314.8px">10</div>
<div class="lab" style="left:-8.8px;top:333.8px">15</div>
<div class="lab" style="left:-8.8px;top:353.1px">20</div>
<div class="lab" style="left:-8.8px;top:376.1px">30</div>
<div class="lab" style="left:-8.8px;top:399.90000000000003px">40</div>
<div class="lab" style="left:-8.8px;top:411.8px">60</div>
<div class="lab" style="left:-8.8px;top:426px;font-size:12px">∞</div>
<div class="lab" style="left:28.200000000000003px;top:221.9px">0</div>
<div class="lab" style="left:28.200000000000003px;top:244.8px">5</div>
<div class="lab" style="left:28.200000000000003px;top:267.8px">10</div>
<div class="lab" style="left:28.200000000000003px;top:290.8px">15</div>
<div class="lab" style="left:28.200000000000003px;top:313.90000000000003px">20</div>
<div class="lab" style="left:28.200000000000003px;top:335.8px">25</div>
<div class="lab" style="left:28.200000000000003px;top:357.8px">30</div>
<div class="lab" style="left:28.200000000000003px;top:380.8px">35</div>
<div class="lab" style="left:28.200000000000003px;top:402.90000000000003px">40</div>
<div class="lab" style="left:28.200000000000003px;top:429.8px">50</div>
<div class="lab" style="left:28.200000000000003px;top:442.7px">60</div>
<svg class="a" style="left:0;top:214px" width="79" height="240" viewBox="0 214 79 240"><path d="M19 232.5h3.4M19 257.5h3.4M19 282.5h3.4M19 301h3.4M19 319.5h3.4M19 338.5h3.4M19 357.8h3.4M19 380.8h3.4M19 404.6h3.4M19 416.5h3.4M19 431.3h3.4M54.2 226.6H56.8M54.2 249.5H56.8M54.2 272.5H56.8M54.2 295.5H56.8M54.2 318.6H56.8M54.2 340.5H56.8M54.2 362.5H56.8M54.2 385.5H56.8M54.2 407.6H56.8M54.2 434.5H56.8M54.2 447.4H56.8" stroke="#b0b0b0" stroke-width="1"/><path d="M19.8 236.7h2.4M19.8 240.8h2.4M19.8 245.0h2.4M19.8 249.2h2.4M19.8 253.3h2.4M19.8 263.8h2.4M19.8 270.0h2.4M19.8 276.2h2.4M19.8 287.1h2.4M19.8 291.8h2.4M19.8 296.4h2.4M19.8 304.7h2.4M19.8 308.4h2.4M19.8 312.1h2.4M19.8 315.8h2.4M19.8 323.3h2.4M19.8 327.1h2.4M19.8 330.9h2.4M19.8 334.7h2.4M19.8 342.4h2.4M19.8 346.2h2.4M19.8 350.1h2.4M19.8 353.9h2.4M19.8 362.4h2.4M19.8 367.0h2.4M19.8 371.6h2.4M19.8 376.2h2.4M19.8 385.6h2.4M19.8 390.3h2.4M19.8 395.1h2.4M19.8 399.8h2.4" stroke="#7d7d7d" stroke-width="1"/><rect x="23.8" y="232" width="1.4" height="199.7" fill="#050505"/><rect x="25.2" y="232" width=".6" height="199.7" fill="#3a4048"/><rect x="57.3" y="217.5" width="12" height="5" rx="1.3" fill="#2d0707" stroke="#14161a" stroke-width=".6"/><rect x="62.9" y="217.5" width=".8" height="5" fill="#180606"/><rect x="57.0" y="226" width="12.6" height="223.6" fill="#050505"/><rect x="57.9" y="227" width="5.0" height="23" fill="#241f14"/><rect x="57.9" y="250" width="5.0" height="5.5" fill="#262110"/><rect x="57.9" y="255.5" width="5.0" height="63" fill="#21240c"/><rect x="57.9" y="318.5" width="5.0" height="130" fill="#2a2909"/><path d="M57.9 249.5h5.0" stroke="#74380f" stroke-width="1"/><path d="M57.9 272.5h5.0M57.9 295.5h5.0" stroke="#68470a" stroke-width="1"/><path d="M57.9 318.6h5.0M57.9 340.5h5.0M57.9 362.5h5.0M57.9 385.5h5.0M57.9 407.6h5.0M57.9 434.5h5.0M57.9 447.4h5.0" stroke="#24420f" stroke-width="1"/><rect x="63.699999999999996" y="227" width="5.0" height="23" fill="#241f14"/><rect x="63.699999999999996" y="250" width="5.0" height="5.5" fill="#262110"/><rect x="63.699999999999996" y="255.5" width="5.0" height="63" fill="#21240c"/><rect x="63.699999999999996" y="318.5" width="5.0" height="130" fill="#2a2909"/><path d="M63.699999999999996 249.5h5.0" stroke="#74380f" stroke-width="1"/><path d="M63.699999999999996 272.5h5.0M63.699999999999996 295.5h5.0" stroke="#68470a" stroke-width="1"/><path d="M63.699999999999996 318.6h5.0M63.699999999999996 340.5h5.0M63.699999999999996 362.5h5.0M63.699999999999996 385.5h5.0M63.699999999999996 407.6h5.0M63.699999999999996 434.5h5.0M63.699999999999996 447.4h5.0" stroke="#24420f" stroke-width="1"/></svg>
<div class="a" style="left:16.6px;top:264.5px;width:15.6px;height:38.7px;border-radius:3px;background:linear-gradient(#3a3a3a 0,#b8b8b8 3%,#b0b0b0 10%,#727272 11.5%,#6c6c6c 15%,#a6a6a6 40%,#b2b2b2 46%,#c2c2c2 52%,#d2d2d2 65%,#c6c6c6 79.5%,#7c7c7c 81%,#8a8a8a 86%,#a4a4a4 96.5%,#444 100%);box-shadow:0 1px 2px rgba(0,0,0,.8),0 0 0 .6px rgba(0,0,0,.55)"><div class="a" style="left:0;top:17px;width:4.6px;height:2px;background:#101010;border-radius:0 1px 1px 0"></div><div class="a" style="right:0;top:17px;width:4.6px;height:2px;background:#101010;border-radius:1px 0 0 1px"></div></div>
<div class="disp" style="top:460px;height:17px"><i></i></div>
<div class="gr" style="left:15px;top:463px;font-size:10px;line-height:11px">0.0</div>
<svg class="a" style="left:5.5px;top:481px" width="10" height="15"><path d="M4.8 .8L9.2 6.2H.4Z M4.8 14.2L9.2 8.8H.4Z" fill="#14181e"/></svg>
<div class="a" style="left:20.5px;top:481px;width:32.5px;height:13.5px;border-radius:7px;background:#3c3c3e;box-shadow:0 0 0 .7px #2a2c30;color:#c6c6c6;font-weight:bold;font-size:9px;line-height:14px;text-align:center">dyn</div>
<svg class="a" style="left:57.5px;top:481px" width="14" height="14"><path d="M.4 .4L8 7L.4 13.6Z M5.6 3.2L13.4 7L5.6 10.8Z" fill="#9c9c9c"/></svg>
<div class="name">Sample 4</div>
<div class="dly"><i></i><span style="left:7px;top:3.7px">dly</span><span style="right:8px;top:3.7px">0</span><u style="top:15.5px"></u><span style="left:7px;top:16.7px">+/-</span><span style="right:8px;top:16.7px">0</span><u style="top:29.5px"></u><span style="left:7px;top:29.7px">cmp</span><span style="right:8px;top:29.7px">0</span><u style="top:43.5px"></u></div>
<div class="bl"></div></div>
<div class="strip" style="left:316px"><div class="dv"></div>
<div class="btn" style="left:5.5px;top:-8px;width:67.5px;height:15px;line-height:16px;font-size:10px">A 7-8</div>
<div class="btn" style="left:5.5px;top:10px;width:57px;height:15px;line-height:15.2px;font-size:9.5px;letter-spacing:-.3px;padding-right:1.6px;border-radius:2.5px 0 0 2.5px">MONITOR</div>
<div class="btn" style="left:63px;top:10px;width:10px;height:15px;border-radius:0 2.5px 2.5px 0"><svg class="a" style="left:1.5px;top:2px" width="7" height="11" viewBox="0 0 7 11"><path d="M3.5 .6V10.4" stroke="#dcdcdc" stroke-width="1.1"/><rect x="1" y="2.4" width="5" height="3.4" fill="#dcdcdc"/><path d="M2.5 4.1H4.5" stroke="#555" stroke-width=".7"/></svg></div>
<div class="sec" style="top:30px;height:31px"></div>
<div class="a" style="left:0;top:30.6px;width:79px;text-align:center;color:#fff;font-weight:bold;font-size:9px;line-height:11px">AUTO</div>
<div class="btn" style="left:5.5px;top:43px;width:67.5px;height:15px;line-height:16.2px;padding-right:8px;color:#2fb34a;text-shadow:none">auto read<span class="tri" style="left:59.4px;top:3px"></span></div>
<div class="np"></div><div class="sec" style="top:65px;height:31px;background:#191b20;border-radius:3.5px 3.5px 0 0"></div>
<div class="a" style="left:7px;top:69px;width:65px;height:4px;border-radius:2px;background:#6a6a6a"></div>
<div class="btn" style="left:7px;top:78.2px;width:65px;height:15px;line-height:16.6px;padding-right:8.5px">no group<span class="tri" style="left:56.8px;top:3.1px"></span></div>
<svg class="a" style="left:0;top:100px" width="79" height="44" viewBox="0 100 79 44"><circle cx="21.4" cy="122.8" r="15.6" fill="url(#halo)"/><path d="M19.2 107.8L21.4 105.0L23.599999999999998 107.8Z" fill="#11151b"/><path d="M36.85 118.66A16 16 0 0 1 29.40 136.66" fill="none" stroke="#3b4049" stroke-width="1" opacity=".8"/><circle cx="21.4" cy="122.2" r="9.9" fill="url(#kb)" stroke="url(#kr)" stroke-width="2"/><line x1="21.4" y1="122.2" x2="14.89" y2="128.71" stroke="#e2e2e2" stroke-width="1.9"/><circle cx="56.6" cy="122.8" r="15.6" fill="url(#halo)"/><path d="M54.4 107.8L56.6 105.0L58.800000000000004 107.8Z" fill="#11151b"/><path d="M72.05 118.66A16 16 0 0 1 64.60 136.66" fill="none" stroke="#3b4049" stroke-width="1" opacity=".8"/><circle cx="56.6" cy="122.2" r="9.9" fill="url(#kb)" stroke="url(#kr)" stroke-width="2"/><line x1="56.6" y1="122.2" x2="63.11" y2="128.71" stroke="#e2e2e2" stroke-width="1.9"/><circle cx="11.3" cy="131.7" r="2.6" fill="#25e04a" opacity=".25"/><circle cx="67.4" cy="131.7" r="2.6" fill="#25e04a" opacity=".25"/><circle cx="11.3" cy="131.7" r="1.7" fill="#2ce350"/><circle cx="67.4" cy="131.7" r="1.7" fill="#2ce350"/></svg>
<div class="disp" style="top:144px;height:16px"><i></i></div>
<div class="gr" style="left:17.5px;font-size:9.5px;line-height:11px;top:145.8px">100</div><div class="gr" style="left:45px;font-size:9.5px;line-height:11px;top:145.8px">100</div>
<div class="a" style="left:39px;top:147px;width:1px;height:9px;background:#2c2c2c"></div>
<svg class="a" style="left:10px;top:148.5px" width="60" height="6"><path d="M.9 3L3.9 .6V5.4Z M58.1 3L55.1 .6V5.4Z" fill="#38d45c"/></svg>
<div class="sq" style="left:11.5px;top:167.8px">I</div><div class="sq rec" style="left:43.5px;top:167.8px"><b></b></div>
<div class="sq" style="left:11.5px;top:192.8px">S</div><div class="sq" style="left:43.5px;top:192.8px">M</div>
<div class="lab" style="left:-8.8px;top:227.8px">12</div>
<div class="lab" style="left:-8.8px;top:252.8px">6</div>
<div class="lab" style="left:-8.8px;top:277.8px">0</div>
<div class="lab" style="left:-8.8px;top:296.3px">5</div>
<div class="lab" style="left:-8.8px;top:314.8px">10</div>
<div class="lab" style="left:-8.8px;top:333.8px">15</div>
<div class="lab" style="left:-8.8px;top:353.1px">20</div>
<div class="lab" style="left:-8.8px;top:376.1px">30</div>
<div class="lab" style="left:-8.8px;top:399.90000000000003px">40</div>
<div class="lab" style="left:-8.8px;top:411.8px">60</div>
<div class="lab" style="left:-8.8px;top:426px;font-size:12px">∞</div>
<div class="lab" style="left:28.200000000000003px;top:221.9px">0</div>
<div class="lab" style="left:28.200000000000003px;top:244.8px">5</div>
<div class="lab" style="left:28.200000000000003px;top:267.8px">10</div>
<div class="lab" style="left:28.200000000000003px;top:290.8px">15</div>
<div class="lab" style="left:28.200000000000003px;top:313.90000000000003px">20</div>
<div class="lab" style="left:28.200000000000003px;top:335.8px">25</div>
<div class="lab" style="left:28.200000000000003px;top:357.8px">30</div>
<div class="lab" style="left:28.200000000000003px;top:380.8px">35</div>
<div class="lab" style="left:28.200000000000003px;top:402.90000000000003px">40</div>
<div class="lab" style="left:28.200000000000003px;top:429.8px">50</div>
<div class="lab" style="left:28.200000000000003px;top:442.7px">60</div>
<svg class="a" style="left:0;top:214px" width="79" height="240" viewBox="0 214 79 240"><path d="M19 232.5h3.4M19 257.5h3.4M19 282.5h3.4M19 301h3.4M19 319.5h3.4M19 338.5h3.4M19 357.8h3.4M19 380.8h3.4M19 404.6h3.4M19 416.5h3.4M19 431.3h3.4M54.2 226.6H56.8M54.2 249.5H56.8M54.2 272.5H56.8M54.2 295.5H56.8M54.2 318.6H56.8M54.2 340.5H56.8M54.2 362.5H56.8M54.2 385.5H56.8M54.2 407.6H56.8M54.2 434.5H56.8M54.2 447.4H56.8" stroke="#b0b0b0" stroke-width="1"/><path d="M19.8 236.7h2.4M19.8 240.8h2.4M19.8 245.0h2.4M19.8 249.2h2.4M19.8 253.3h2.4M19.8 263.8h2.4M19.8 270.0h2.4M19.8 276.2h2.4M19.8 287.1h2.4M19.8 291.8h2.4M19.8 296.4h2.4M19.8 304.7h2.4M19.8 308.4h2.4M19.8 312.1h2.4M19.8 315.8h2.4M19.8 323.3h2.4M19.8 327.1h2.4M19.8 330.9h2.4M19.8 334.7h2.4M19.8 342.4h2.4M19.8 346.2h2.4M19.8 350.1h2.4M19.8 353.9h2.4M19.8 362.4h2.4M19.8 367.0h2.4M19.8 371.6h2.4M19.8 376.2h2.4M19.8 385.6h2.4M19.8 390.3h2.4M19.8 395.1h2.4M19.8 399.8h2.4" stroke="#7d7d7d" stroke-width="1"/><rect x="23.8" y="232" width="1.4" height="199.7" fill="#050505"/><rect x="25.2" y="232" width=".6" height="199.7" fill="#3a4048"/><rect x="57.3" y="217.5" width="12" height="5" rx="1.3" fill="#2d0707" stroke="#14161a" stroke-width=".6"/><rect x="62.9" y="217.5" width=".8" height="5" fill="#180606"/><rect x="57.0" y="226" width="12.6" height="223.6" fill="#050505"/><rect x="57.9" y="227" width="5.0" height="23" fill="#241f14"/><rect x="57.9" y="250" width="5.0" height="5.5" fill="#262110"/><rect x="57.9" y="255.5" width="5.0" height="63" fill="#21240c"/><rect x="57.9" y="318.5" width="5.0" height="130" fill="#2a2909"/><path d="M57.9 249.5h5.0" stroke="#74380f" stroke-width="1"/><path d="M57.9 272.5h5.0M57.9 295.5h5.0" stroke="#68470a" stroke-width="1"/><path d="M57.9 318.6h5.0M57.9 340.5h5.0M57.9 362.5h5.0M57.9 385.5h5.0M57.9 407.6h5.0M57.9 434.5h5.0M57.9 447.4h5.0" stroke="#24420f" stroke-width="1"/><rect x="63.699999999999996" y="227" width="5.0" height="23" fill="#241f14"/><rect x="63.699999999999996" y="250" width="5.0" height="5.5" fill="#262110"/><rect x="63.699999999999996" y="255.5" width="5.0" height="63" fill="#21240c"/><rect x="63.699999999999996" y="318.5" width="5.0" height="130" fill="#2a2909"/><path d="M63.699999999999996 249.5h5.0" stroke="#74380f" stroke-width="1"/><path d="M63.699999999999996 272.5h5.0M63.699999999999996 295.5h5.0" stroke="#68470a" stroke-width="1"/><path d="M63.699999999999996 318.6h5.0M63.699999999999996 340.5h5.0M63.699999999999996 362.5h5.0M63.699999999999996 385.5h5.0M63.699999999999996 407.6h5.0M63.699999999999996 434.5h5.0M63.699999999999996 447.4h5.0" stroke="#24420f" stroke-width="1"/></svg>
<div class="a" style="left:16.6px;top:264.5px;width:15.6px;height:38.7px;border-radius:3px;background:linear-gradient(#3a3a3a 0,#b8b8b8 3%,#b0b0b0 10%,#727272 11.5%,#6c6c6c 15%,#a6a6a6 40%,#b2b2b2 46%,#c2c2c2 52%,#d2d2d2 65%,#c6c6c6 79.5%,#7c7c7c 81%,#8a8a8a 86%,#a4a4a4 96.5%,#444 100%);box-shadow:0 1px 2px rgba(0,0,0,.8),0 0 0 .6px rgba(0,0,0,.55)"><div class="a" style="left:0;top:17px;width:4.6px;height:2px;background:#101010;border-radius:0 1px 1px 0"></div><div class="a" style="right:0;top:17px;width:4.6px;height:2px;background:#101010;border-radius:1px 0 0 1px"></div></div>
<div class="disp" style="top:460px;height:17px"><i></i></div>
<div class="gr" style="left:15px;top:463px;font-size:10px;line-height:11px">0.0</div>
<svg class="a" style="left:5.5px;top:481px" width="10" height="15"><path d="M4.8 .8L9.2 6.2H.4Z M4.8 14.2L9.2 8.8H.4Z" fill="#14181e"/></svg>
<div class="a" style="left:20.5px;top:481px;width:32.5px;height:13.5px;border-radius:7px;background:#3c3c3e;box-shadow:0 0 0 .7px #2a2c30;color:#c6c6c6;font-weight:bold;font-size:9px;line-height:14px;text-align:center">dyn</div>
<svg class="a" style="left:57.5px;top:481px" width="14" height="14"><path d="M.4 .4L8 7L.4 13.6Z M5.6 3.2L13.4 7L5.6 10.8Z" fill="#9c9c9c"/></svg>
<div class="name">Sample 5</div>
<div class="dly"><i></i><span style="left:7px;top:3.7px">dly</span><span style="right:8px;top:3.7px">0</span><u style="top:15.5px"></u><span style="left:7px;top:16.7px">+/-</span><span style="right:8px;top:16.7px">0</span><u style="top:29.5px"></u><span style="left:7px;top:29.7px">cmp</span><span style="right:8px;top:29.7px">0</span><u style="top:43.5px"></u></div>
<div class="bl"></div></div>
<div class="strip" style="left:395px"><div class="dv"></div>
<div class="btn" style="left:5.5px;top:-8px;width:67.5px;height:15px;line-height:16px;font-size:10px">A 9-10</div>
<div class="btn" style="left:5.5px;top:10px;width:57px;height:15px;line-height:15.2px;font-size:9.5px;letter-spacing:-.3px;padding-right:1.6px;border-radius:2.5px 0 0 2.5px">MONITOR</div>
<div class="btn" style="left:63px;top:10px;width:10px;height:15px;border-radius:0 2.5px 2.5px 0"><svg class="a" style="left:1.5px;top:2px" width="7" height="11" viewBox="0 0 7 11"><path d="M3.5 .6V10.4" stroke="#dcdcdc" stroke-width="1.1"/><rect x="1" y="2.4" width="5" height="3.4" fill="#dcdcdc"/><path d="M2.5 4.1H4.5" stroke="#555" stroke-width=".7"/></svg></div>
<div class="sec" style="top:30px;height:31px"></div>
<div class="a" style="left:0;top:30.6px;width:79px;text-align:center;color:#fff;font-weight:bold;font-size:9px;line-height:11px">AUTO</div>
<div class="btn" style="left:5.5px;top:43px;width:67.5px;height:15px;line-height:16.2px;padding-right:8px;color:#2fb34a;text-shadow:none">auto read<span class="tri" style="left:59.4px;top:3px"></span></div>
<div class="np"></div><div class="sec" style="top:65px;height:31px;background:#191b20;border-radius:3.5px 3.5px 0 0"></div>
<div class="a" style="left:7px;top:69px;width:65px;height:4px;border-radius:2px;background:#6a6a6a"></div>
<div class="btn" style="left:7px;top:78.2px;width:65px;height:15px;line-height:16.6px;padding-right:8.5px">no group<span class="tri" style="left:56.8px;top:3.1px"></span></div>
<svg class="a" style="left:0;top:100px" width="79" height="44" viewBox="0 100 79 44"><circle cx="21.4" cy="122.8" r="15.6" fill="url(#halo)"/><path d="M19.2 107.8L21.4 105.0L23.599999999999998 107.8Z" fill="#11151b"/><path d="M36.85 118.66A16 16 0 0 1 29.40 136.66" fill="none" stroke="#3b4049" stroke-width="1" opacity=".8"/><circle cx="21.4" cy="122.2" r="9.9" fill="url(#kb)" stroke="url(#kr)" stroke-width="2"/><line x1="21.4" y1="122.2" x2="14.89" y2="128.71" stroke="#e2e2e2" stroke-width="1.9"/><circle cx="56.6" cy="122.8" r="15.6" fill="url(#halo)"/><path d="M54.4 107.8L56.6 105.0L58.800000000000004 107.8Z" fill="#11151b"/><path d="M72.05 118.66A16 16 0 0 1 64.60 136.66" fill="none" stroke="#3b4049" stroke-width="1" opacity=".8"/><circle cx="56.6" cy="122.2" r="9.9" fill="url(#kb)" stroke="url(#kr)" stroke-width="2"/><line x1="56.6" y1="122.2" x2="63.11" y2="128.71" stroke="#e2e2e2" stroke-width="1.9"/><circle cx="11.3" cy="131.7" r="2.6" fill="#25e04a" opacity=".25"/><circle cx="67.4" cy="131.7" r="2.6" fill="#25e04a" opacity=".25"/><circle cx="11.3" cy="131.7" r="1.7" fill="#2ce350"/><circle cx="67.4" cy="131.7" r="1.7" fill="#2ce350"/></svg>
<div class="disp" style="top:144px;height:16px"><i></i></div>
<div class="gr" style="left:17.5px;font-size:9.5px;line-height:11px;top:145.8px">100</div><div class="gr" style="left:45px;font-size:9.5px;line-height:11px;top:145.8px">100</div>
<div class="a" style="left:39px;top:147px;width:1px;height:9px;background:#2c2c2c"></div>
<svg class="a" style="left:10px;top:148.5px" width="60" height="6"><path d="M.9 3L3.9 .6V5.4Z M58.1 3L55.1 .6V5.4Z" fill="#38d45c"/></svg>
<div class="sq" style="left:11.5px;top:167.8px">I</div><div class="sq rec" style="left:43.5px;top:167.8px"><b></b></div>
<div class="sq" style="left:11.5px;top:192.8px">S</div><div class="sq" style="left:43.5px;top:192.8px">M</div>
<div class="lab" style="left:-8.8px;top:227.8px">12</div>
<div class="lab" style="left:-8.8px;top:252.8px">6</div>
<div class="lab" style="left:-8.8px;top:277.8px">0</div>
<div class="lab" style="left:-8.8px;top:296.3px">5</div>
<div class="lab" style="left:-8.8px;top:314.8px">10</div>
<div class="lab" style="left:-8.8px;top:333.8px">15</div>
<div class="lab" style="left:-8.8px;top:353.1px">20</div>
<div class="lab" style="left:-8.8px;top:376.1px">30</div>
<div class="lab" style="left:-8.8px;top:399.90000000000003px">40</div>
<div class="lab" style="left:-8.8px;top:411.8px">60</div>
<div class="lab" style="left:-8.8px;top:426px;font-size:12px">∞</div>
<div class="lab" style="left:28.200000000000003px;top:221.9px">0</div>
<div class="lab" style="left:28.200000000000003px;top:244.8px">5</div>
<div class="lab" style="left:28.200000000000003px;top:267.8px">10</div>
<div class="lab" style="left:28.200000000000003px;top:290.8px">15</div>
<div class="lab" style="left:28.200000000000003px;top:313.90000000000003px">20</div>
<div class="lab" style="left:28.200000000000003px;top:335.8px">25</div>
<div class="lab" style="left:28.200000000000003px;top:357.8px">30</div>
<div class="lab" style="left:28.200000000000003px;top:380.8px">35</div>
<div class="lab" style="left:28.200000000000003px;top:402.90000000000003px">40</div>
<div class="lab" style="left:28.200000000000003px;top:429.8px">50</div>
<div class="lab" style="left:28.200000000000003px;top:442.7px">60</div>
<svg class="a" style="left:0;top:214px" width="79" height="240" viewBox="0 214 79 240"><path d="M19 232.5h3.4M19 257.5h3.4M19 282.5h3.4M19 301h3.4M19 319.5h3.4M19 338.5h3.4M19 357.8h3.4M19 380.8h3.4M19 404.6h3.4M19 416.5h3.4M19 431.3h3.4M54.2 226.6H56.8M54.2 249.5H56.8M54.2 272.5H56.8M54.2 295.5H56.8M54.2 318.6H56.8M54.2 340.5H56.8M54.2 362.5H56.8M54.2 385.5H56.8M54.2 407.6H56.8M54.2 434.5H56.8M54.2 447.4H56.8" stroke="#b0b0b0" stroke-width="1"/><path d="M19.8 236.7h2.4M19.8 240.8h2.4M19.8 245.0h2.4M19.8 249.2h2.4M19.8 253.3h2.4M19.8 263.8h2.4M19.8 270.0h2.4M19.8 276.2h2.4M19.8 287.1h2.4M19.8 291.8h2.4M19.8 296.4h2.4M19.8 304.7h2.4M19.8 308.4h2.4M19.8 312.1h2.4M19.8 315.8h2.4M19.8 323.3h2.4M19.8 327.1h2.4M19.8 330.9h2.4M19.8 334.7h2.4M19.8 342.4h2.4M19.8 346.2h2.4M19.8 350.1h2.4M19.8 353.9h2.4M19.8 362.4h2.4M19.8 367.0h2.4M19.8 371.6h2.4M19.8 376.2h2.4M19.8 385.6h2.4M19.8 390.3h2.4M19.8 395.1h2.4M19.8 399.8h2.4" stroke="#7d7d7d" stroke-width="1"/><rect x="23.8" y="232" width="1.4" height="199.7" fill="#050505"/><rect x="25.2" y="232" width=".6" height="199.7" fill="#3a4048"/><rect x="57.3" y="217.5" width="12" height="5" rx="1.3" fill="#2d0707" stroke="#14161a" stroke-width=".6"/><rect x="62.9" y="217.5" width=".8" height="5" fill="#180606"/><rect x="57.0" y="226" width="12.6" height="223.6" fill="#050505"/><rect x="57.9" y="227" width="5.0" height="23" fill="#241f14"/><rect x="57.9" y="250" width="5.0" height="5.5" fill="#262110"/><rect x="57.9" y="255.5" width="5.0" height="63" fill="#21240c"/><rect x="57.9" y="318.5" width="5.0" height="130" fill="#2a2909"/><path d="M57.9 249.5h5.0" stroke="#74380f" stroke-width="1"/><path d="M57.9 272.5h5.0M57.9 295.5h5.0" stroke="#68470a" stroke-width="1"/><path d="M57.9 318.6h5.0M57.9 340.5h5.0M57.9 362.5h5.0M57.9 385.5h5.0M57.9 407.6h5.0M57.9 434.5h5.0M57.9 447.4h5.0" stroke="#24420f" stroke-width="1"/><rect x="63.699999999999996" y="227" width="5.0" height="23" fill="#241f14"/><rect x="63.699999999999996" y="250" width="5.0" height="5.5" fill="#262110"/><rect x="63.699999999999996" y="255.5" width="5.0" height="63" fill="#21240c"/><rect x="63.699999999999996" y="318.5" width="5.0" height="130" fill="#2a2909"/><path d="M63.699999999999996 249.5h5.0" stroke="#74380f" stroke-width="1"/><path d="M63.699999999999996 272.5h5.0M63.699999999999996 295.5h5.0" stroke="#68470a" stroke-width="1"/><path d="M63.699999999999996 318.6h5.0M63.699999999999996 340.5h5.0M63.699999999999996 362.5h5.0M63.699999999999996 385.5h5.0M63.699999999999996 407.6h5.0M63.699999999999996 434.5h5.0M63.699999999999996 447.4h5.0" stroke="#24420f" stroke-width="1"/></svg>
<div class="a" style="left:16.6px;top:264.5px;width:15.6px;height:38.7px;border-radius:3px;background:linear-gradient(#3a3a3a 0,#b8b8b8 3%,#b0b0b0 10%,#727272 11.5%,#6c6c6c 15%,#a6a6a6 40%,#b2b2b2 46%,#c2c2c2 52%,#d2d2d2 65%,#c6c6c6 79.5%,#7c7c7c 81%,#8a8a8a 86%,#a4a4a4 96.5%,#444 100%);box-shadow:0 1px 2px rgba(0,0,0,.8),0 0 0 .6px rgba(0,0,0,.55)"><div class="a" style="left:0;top:17px;width:4.6px;height:2px;background:#101010;border-radius:0 1px 1px 0"></div><div class="a" style="right:0;top:17px;width:4.6px;height:2px;background:#101010;border-radius:1px 0 0 1px"></div></div>
<div class="disp" style="top:460px;height:17px"><i></i></div>
<div class="gr" style="left:15px;top:463px;font-size:10px;line-height:11px">0.0</div>
<svg class="a" style="left:5.5px;top:481px" width="10" height="15"><path d="M4.8 .8L9.2 6.2H.4Z M4.8 14.2L9.2 8.8H.4Z" fill="#14181e"/></svg>
<div class="a" style="left:20.5px;top:481px;width:32.5px;height:13.5px;border-radius:7px;background:#3c3c3e;box-shadow:0 0 0 .7px #2a2c30;color:#c6c6c6;font-weight:bold;font-size:9px;line-height:14px;text-align:center">dyn</div>
<svg class="a" style="left:57.5px;top:481px" width="14" height="14"><path d="M.4 .4L8 7L.4 13.6Z M5.6 3.2L13.4 7L5.6 10.8Z" fill="#9c9c9c"/></svg>
<div class="name">Sample 6</div>
<div class="dly"><i></i><span style="left:7px;top:3.7px">dly</span><span style="right:8px;top:3.7px">0</span><u style="top:15.5px"></u><span style="left:7px;top:16.7px">+/-</span><span style="right:8px;top:16.7px">0</span><u style="top:29.5px"></u><span style="left:7px;top:29.7px">cmp</span><span style="right:8px;top:29.7px">0</span><u style="top:43.5px"></u></div>
<div class="bl"></div></div>
<div class="strip" style="left:474px"><div class="dv"></div>
<div class="btn" style="left:5.5px;top:-8px;width:67.5px;height:15px;line-height:16px;font-size:10px">A 3</div>
<div class="btn" style="left:5.5px;top:10px;width:57px;height:15px;line-height:15.2px;font-size:9.5px;letter-spacing:-.3px;padding-right:1.6px;border-radius:2.5px 0 0 2.5px">MONITOR</div>
<div class="btn" style="left:63px;top:10px;width:10px;height:15px;border-radius:0 2.5px 2.5px 0"><svg class="a" style="left:1.5px;top:2px" width="7" height="11" viewBox="0 0 7 11"><path d="M3.5 .6V10.4" stroke="#dcdcdc" stroke-width="1.1"/><rect x="1" y="2.4" width="5" height="3.4" fill="#dcdcdc"/><path d="M2.5 4.1H4.5" stroke="#555" stroke-width=".7"/></svg></div>
<div class="sec" style="top:30px;height:31px"></div>
<div class="a" style="left:0;top:30.6px;width:79px;text-align:center;color:#fff;font-weight:bold;font-size:9px;line-height:11px">AUTO</div>
<div class="btn" style="left:5.5px;top:43px;width:67.5px;height:15px;line-height:16.2px;padding-right:8px;color:#2fb34a;text-shadow:none">auto read<span class="tri" style="left:59.4px;top:3px"></span></div>
<div class="np"></div><div class="sec" style="top:65px;height:31px;background:#191b20;border-radius:3.5px 3.5px 0 0"></div>
<div class="a" style="left:7px;top:69px;width:65px;height:4px;border-radius:2px;background:#6a6a6a"></div>
<div class="btn" style="left:7px;top:78.2px;width:65px;height:15px;line-height:16.6px;padding-right:8.5px">no group<span class="tri" style="left:56.8px;top:3.1px"></span></div>
<svg class="a" style="left:0;top:100px" width="79" height="44" viewBox="0 100 79 44"><circle cx="38" cy="123.0" r="15.6" fill="url(#halo)"/><path d="M35.8 108.0L38 105.2L40.2 108.0Z" fill="#11151b"/><path d="M53.45 118.86A16 16 0 0 1 46.00 136.86" fill="none" stroke="#3b4049" stroke-width="1" opacity=".8"/><path d="M31.24 137.50A16 16 0 0 1 25.39 132.85" fill="none" stroke="#3b4049" stroke-width="1" opacity=".7"/><circle cx="38" cy="122.4" r="9.9" fill="url(#kb)" stroke="url(#kr)" stroke-width="2"/><line x1="38" y1="122.4" x2="38.00" y2="113.20" stroke="#e2e2e2" stroke-width="1.9"/><rect x="35.4" y="103.6" width="5.2" height="6.8" rx="2.4" fill="#25e04a" opacity=".25"/><rect x="36.2" y="104.4" width="3.6" height="5.2" rx="1.7" fill="#2ce350"/></svg>
<div class="disp" style="top:144px;height:16px"><i></i></div>
<div class="gr" style="left:11px;font-size:9.5px;line-height:11px;top:145.8px">pan</div><div class="gr" style="left:52px;font-size:9.5px;line-height:11px;top:145.8px">0</div>
<svg class="a" style="left:40px;top:148.5px" width="30" height="6"><path d="M5.2 3L1.9 .5V5.5Z M24.9 3L28.2 .5V5.5Z" fill="#38d45c"/></svg>
<div class="sq" style="left:11.5px;top:167.8px">I</div><div class="sq rec" style="left:43.5px;top:167.8px"><b></b></div>
<div class="sq" style="left:11.5px;top:192.8px">S</div><div class="sq" style="left:43.5px;top:192.8px">M</div>
<div class="lab" style="left:-8.8px;top:227.8px">12</div>
<div class="lab" style="left:-8.8px;top:252.8px">6</div>
<div class="lab" style="left:-8.8px;top:277.8px">0</div>
<div class="lab" style="left:-8.8px;top:296.3px">5</div>
<div class="lab" style="left:-8.8px;top:314.8px">10</div>
<div class="lab" style="left:-8.8px;top:333.8px">15</div>
<div class="lab" style="left:-8.8px;top:353.1px">20</div>
<div class="lab" style="left:-8.8px;top:376.1px">30</div>
<div class="lab" style="left:-8.8px;top:399.90000000000003px">40</div>
<div class="lab" style="left:-8.8px;top:411.8px">60</div>
<div class="lab" style="left:-8.8px;top:426px;font-size:12px">∞</div>
<div class="lab" style="left:30.200000000000003px;top:221.9px">0</div>
<div class="lab" style="left:30.200000000000003px;top:244.8px">5</div>
<div class="lab" style="left:30.200000000000003px;top:267.8px">10</div>
<div class="lab" style="left:30.200000000000003px;top:290.8px">15</div>
<div class="lab" style="left:30.200000000000003px;top:313.90000000000003px">20</div>
<div class="lab" style="left:30.200000000000003px;top:335.8px">25</div>
<div class="lab" style="left:30.200000000000003px;top:357.8px">30</div>
<div class="lab" style="left:30.200000000000003px;top:380.8px">35</div>
<div class="lab" style="left:30.200000000000003px;top:402.90000000000003px">40</div>
<div class="lab" style="left:30.200000000000003px;top:429.8px">50</div>
<div class="lab" style="left:30.200000000000003px;top:442.7px">60</div>
<svg class="a" style="left:0;top:214px" width="79" height="240" viewBox="0 214 79 240"><path d="M19 232.5h3.4M19 257.5h3.4M19 282.5h3.4M19 301h3.4M19 319.5h3.4M19 338.5h3.4M19 357.8h3.4M19 380.8h3.4M19 404.6h3.4M19 416.5h3.4M19 431.3h3.4M55.5 226.6H58.8M55.5 249.5H58.8M55.5 272.5H58.8M55.5 295.5H58.8M55.5 318.6H58.8M55.5 340.5H58.8M55.5 362.5H58.8M55.5 385.5H58.8M55.5 407.6H58.8M55.5 434.5H58.8M55.5 447.4H58.8" stroke="#b0b0b0" stroke-width="1"/><path d="M19.8 236.7h2.4M19.8 240.8h2.4M19.8 245.0h2.4M19.8 249.2h2.4M19.8 253.3h2.4M19.8 263.8h2.4M19.8 270.0h2.4M19.8 276.2h2.4M19.8 287.1h2.4M19.8 291.8h2.4M19.8 296.4h2.4M19.8 304.7h2.4M19.8 308.4h2.4M19.8 312.1h2.4M19.8 315.8h2.4M19.8 323.3h2.4M19.8 327.1h2.4M19.8 330.9h2.4M19.8 334.7h2.4M19.8 342.4h2.4M19.8 346.2h2.4M19.8 350.1h2.4M19.8 353.9h2.4M19.8 362.4h2.4M19.8 367.0h2.4M19.8 371.6h2.4M19.8 376.2h2.4M19.8 385.6h2.4M19.8 390.3h2.4M19.8 395.1h2.4M19.8 399.8h2.4" stroke="#7d7d7d" stroke-width="1"/><rect x="23.8" y="232" width="1.4" height="199.7" fill="#050505"/><rect x="25.2" y="232" width=".6" height="199.7" fill="#3a4048"/><rect x="59.2" y="217.5" width="7.6" height="5" rx="1.3" fill="#2d0707" stroke="#14161a" stroke-width=".6"/><rect x="58.900000000000006" y="226" width="8.2" height="223.6" fill="#050505"/><rect x="60.1" y="227" width="5.8" height="23" fill="#241f14"/><rect x="60.1" y="250" width="5.8" height="5.5" fill="#262110"/><rect x="60.1" y="255.5" width="5.8" height="63" fill="#21240c"/><rect x="60.1" y="318.5" width="5.8" height="130" fill="#2a2909"/><path d="M60.1 249.5h5.8" stroke="#74380f" stroke-width="1"/><path d="M60.1 272.5h5.8M60.1 295.5h5.8" stroke="#68470a" stroke-width="1"/><path d="M60.1 318.6h5.8M60.1 340.5h5.8M60.1 362.5h5.8M60.1 385.5h5.8M60.1 407.6h5.8M60.1 434.5h5.8M60.1 447.4h5.8" stroke="#24420f" stroke-width="1"/></svg>
<div class="a" style="left:16.6px;top:264.5px;width:15.6px;height:38.7px;border-radius:3px;background:linear-gradient(#3a3a3a 0,#b8b8b8 3%,#b0b0b0 10%,#727272 11.5%,#6c6c6c 15%,#a6a6a6 40%,#b2b2b2 46%,#c2c2c2 52%,#d2d2d2 65%,#c6c6c6 79.5%,#7c7c7c 81%,#8a8a8a 86%,#a4a4a4 96.5%,#444 100%);box-shadow:0 1px 2px rgba(0,0,0,.8),0 0 0 .6px rgba(0,0,0,.55)"><div class="a" style="left:0;top:17px;width:4.6px;height:2px;background:#101010;border-radius:0 1px 1px 0"></div><div class="a" style="right:0;top:17px;width:4.6px;height:2px;background:#101010;border-radius:1px 0 0 1px"></div></div>
<div class="disp" style="top:460px;height:17px"><i></i></div>
<div class="gr" style="left:15px;top:463px;font-size:10px;line-height:11px">0.0</div>
<svg class="a" style="left:5.5px;top:481px" width="10" height="15"><path d="M4.8 .8L9.2 6.2H.4Z M4.8 14.2L9.2 8.8H.4Z" fill="#14181e"/></svg>
<div class="a" style="left:20.5px;top:481px;width:32.5px;height:13.5px;border-radius:7px;background:#3c3c3e;box-shadow:0 0 0 .7px #2a2c30;color:#c6c6c6;font-weight:bold;font-size:9px;line-height:14px;text-align:center">dyn</div>
<svg class="a" style="left:57.5px;top:481px" width="14" height="14"><path d="M.4 .4L8 7L.4 13.6Z M5.6 3.2L13.4 7L5.6 10.8Z" fill="#9c9c9c"/></svg>
<div class="name">Sample 7</div>
<div class="dly"><i></i><span style="left:7px;top:3.7px">dly</span><span style="right:8px;top:3.7px">0</span><u style="top:15.5px"></u><span style="left:7px;top:16.7px">+/-</span><span style="right:8px;top:16.7px">0</span><u style="top:29.5px"></u><span style="left:7px;top:29.7px">cmp</span><span style="right:8px;top:29.7px">0</span><u style="top:43.5px"></u></div>
<div class="bl"></div></div>
<div class="strip" style="left:553px"><div class="dv"></div>
<div class="btn" style="left:5.5px;top:-8px;width:67.5px;height:15px;line-height:16px;font-size:10px">A 4</div>
<div class="btn" style="left:5.5px;top:10px;width:57px;height:15px;line-height:15.2px;font-size:9.5px;letter-spacing:-.3px;padding-right:1.6px;border-radius:2.5px 0 0 2.5px">MONITOR</div>
<div class="btn" style="left:63px;top:10px;width:10px;height:15px;border-radius:0 2.5px 2.5px 0"><svg class="a" style="left:1.5px;top:2px" width="7" height="11" viewBox="0 0 7 11"><path d="M3.5 .6V10.4" stroke="#dcdcdc" stroke-width="1.1"/><rect x="1" y="2.4" width="5" height="3.4" fill="#dcdcdc"/><path d="M2.5 4.1H4.5" stroke="#555" stroke-width=".7"/></svg></div>
<div class="sec" style="top:30px;height:31px"></div>
<div class="a" style="left:0;top:30.6px;width:79px;text-align:center;color:#fff;font-weight:bold;font-size:9px;line-height:11px">AUTO</div>
<div class="btn" style="left:5.5px;top:43px;width:67.5px;height:15px;line-height:16.2px;padding-right:8px;color:#2fb34a;text-shadow:none">auto read<span class="tri" style="left:59.4px;top:3px"></span></div>
<div class="np"></div><div class="sec" style="top:65px;height:31px;background:#191b20;border-radius:3.5px 3.5px 0 0"></div>
<div class="a" style="left:7px;top:69px;width:65px;height:4px;border-radius:2px;background:#6a6a6a"></div>
<div class="btn" style="left:7px;top:78.2px;width:65px;height:15px;line-height:16.6px;padding-right:8.5px">no group<span class="tri" style="left:56.8px;top:3.1px"></span></div>
<svg class="a" style="left:0;top:100px" width="79" height="44" viewBox="0 100 79 44"><circle cx="38" cy="123.0" r="15.6" fill="url(#halo)"/><path d="M35.8 108.0L38 105.2L40.2 108.0Z" fill="#11151b"/><path d="M53.45 118.86A16 16 0 0 1 46.00 136.86" fill="none" stroke="#3b4049" stroke-width="1" opacity=".8"/><path d="M31.24 137.50A16 16 0 0 1 25.39 132.85" fill="none" stroke="#3b4049" stroke-width="1" opacity=".7"/><circle cx="38" cy="122.4" r="9.9" fill="url(#kb)" stroke="url(#kr)" stroke-width="2"/><line x1="38" y1="122.4" x2="38.00" y2="113.20" stroke="#e2e2e2" stroke-width="1.9"/><rect x="35.4" y="103.6" width="5.2" height="6.8" rx="2.4" fill="#25e04a" opacity=".25"/><rect x="36.2" y="104.4" width="3.6" height="5.2" rx="1.7" fill="#2ce350"/></svg>
<div class="disp" style="top:144px;height:16px"><i></i></div>
<div class="gr" style="left:11px;font-size:9.5px;line-height:11px;top:145.8px">pan</div><div class="gr" style="left:52px;font-size:9.5px;line-height:11px;top:145.8px">0</div>
<svg class="a" style="left:40px;top:148.5px" width="30" height="6"><path d="M5.2 3L1.9 .5V5.5Z M24.9 3L28.2 .5V5.5Z" fill="#38d45c"/></svg>
<div class="sq" style="left:11.5px;top:167.8px">I</div><div class="sq rec" style="left:43.5px;top:167.8px"><b></b></div>
<div class="sq" style="left:11.5px;top:192.8px">S</div><div class="sq" style="left:43.5px;top:192.8px">M</div>
<div class="lab" style="left:-8.8px;top:227.8px">12</div>
<div class="lab" style="left:-8.8px;top:252.8px">6</div>
<div class="lab" style="left:-8.8px;top:277.8px">0</div>
<div class="lab" style="left:-8.8px;top:296.3px">5</div>
<div class="lab" style="left:-8.8px;top:314.8px">10</div>
<div class="lab" style="left:-8.8px;top:333.8px">15</div>
<div class="lab" style="left:-8.8px;top:353.1px">20</div>
<div class="lab" style="left:-8.8px;top:376.1px">30</div>
<div class="lab" style="left:-8.8px;top:399.90000000000003px">40</div>
<div class="lab" style="left:-8.8px;top:411.8px">60</div>
<div class="lab" style="left:-8.8px;top:426px;font-size:12px">∞</div>
<div class="lab" style="left:30.200000000000003px;top:221.9px">0</div>
<div class="lab" style="left:30.200000000000003px;top:244.8px">5</div>
<div class="lab" style="left:30.200000000000003px;top:267.8px">10</div>
<div class="lab" style="left:30.200000000000003px;top:290.8px">15</div>
<div class="lab" style="left:30.200000000000003px;top:313.90000000000003px">20</div>
<div class="lab" style="left:30.200000000000003px;top:335.8px">25</div>
<div class="lab" style="left:30.200000000000003px;top:357.8px">30</div>
<div class="lab" style="left:30.200000000000003px;top:380.8px">35</div>
<div class="lab" style="left:30.200000000000003px;top:402.90000000000003px">40</div>
<div class="lab" style="left:30.200000000000003px;top:429.8px">50</div>
<div class="lab" style="left:30.200000000000003px;top:442.7px">60</div>
<svg class="a" style="left:0;top:214px" width="79" height="240" viewBox="0 214 79 240"><path d="M19 232.5h3.4M19 257.5h3.4M19 282.5h3.4M19 301h3.4M19 319.5h3.4M19 338.5h3.4M19 357.8h3.4M19 380.8h3.4M19 404.6h3.4M19 416.5h3.4M19 431.3h3.4M55.5 226.6H58.8M55.5 249.5H58.8M55.5 272.5H58.8M55.5 295.5H58.8M55.5 318.6H58.8M55.5 340.5H58.8M55.5 362.5H58.8M55.5 385.5H58.8M55.5 407.6H58.8M55.5 434.5H58.8M55.5 447.4H58.8" stroke="#b0b0b0" stroke-width="1"/><path d="M19.8 236.7h2.4M19.8 240.8h2.4M19.8 245.0h2.4M19.8 249.2h2.4M19.8 253.3h2.4M19.8 263.8h2.4M19.8 270.0h2.4M19.8 276.2h2.4M19.8 287.1h2.4M19.8 291.8h2.4M19.8 296.4h2.4M19.8 304.7h2.4M19.8 308.4h2.4M19.8 312.1h2.4M19.8 315.8h2.4M19.8 323.3h2.4M19.8 327.1h2.4M19.8 330.9h2.4M19.8 334.7h2.4M19.8 342.4h2.4M19.8 346.2h2.4M19.8 350.1h2.4M19.8 353.9h2.4M19.8 362.4h2.4M19.8 367.0h2.4M19.8 371.6h2.4M19.8 376.2h2.4M19.8 385.6h2.4M19.8 390.3h2.4M19.8 395.1h2.4M19.8 399.8h2.4" stroke="#7d7d7d" stroke-width="1"/><rect x="23.8" y="232" width="1.4" height="199.7" fill="#050505"/><rect x="25.2" y="232" width=".6" height="199.7" fill="#3a4048"/><rect x="59.2" y="217.5" width="7.6" height="5" rx="1.3" fill="#2d0707" stroke="#14161a" stroke-width=".6"/><rect x="58.900000000000006" y="226" width="8.2" height="223.6" fill="#050505"/><rect x="60.1" y="227" width="5.8" height="23" fill="#241f14"/><rect x="60.1" y="250" width="5.8" height="5.5" fill="#262110"/><rect x="60.1" y="255.5" width="5.8" height="63" fill="#21240c"/><rect x="60.1" y="318.5" width="5.8" height="130" fill="#2a2909"/><path d="M60.1 249.5h5.8" stroke="#74380f" stroke-width="1"/><path d="M60.1 272.5h5.8M60.1 295.5h5.8" stroke="#68470a" stroke-width="1"/><path d="M60.1 318.6h5.8M60.1 340.5h5.8M60.1 362.5h5.8M60.1 385.5h5.8M60.1 407.6h5.8M60.1 434.5h5.8M60.1 447.4h5.8" stroke="#24420f" stroke-width="1"/></svg>
<div class="a" style="left:16.6px;top:264.5px;width:15.6px;height:38.7px;border-radius:3px;background:linear-gradient(#3a3a3a 0,#b8b8b8 3%,#b0b0b0 10%,#727272 11.5%,#6c6c6c 15%,#a6a6a6 40%,#b2b2b2 46%,#c2c2c2 52%,#d2d2d2 65%,#c6c6c6 79.5%,#7c7c7c 81%,#8a8a8a 86%,#a4a4a4 96.5%,#444 100%);box-shadow:0 1px 2px rgba(0,0,0,.8),0 0 0 .6px rgba(0,0,0,.55)"><div class="a" style="left:0;top:17px;width:4.6px;height:2px;background:#101010;border-radius:0 1px 1px 0"></div><div class="a" style="right:0;top:17px;width:4.6px;height:2px;background:#101010;border-radius:1px 0 0 1px"></div></div>
<div class="disp" style="top:460px;height:17px"><i></i></div>
<div class="gr" style="left:15px;top:463px;font-size:10px;line-height:11px">0.0</div>
<svg class="a" style="left:5.5px;top:481px" width="10" height="15"><path d="M4.8 .8L9.2 6.2H.4Z M4.8 14.2L9.2 8.8H.4Z" fill="#14181e"/></svg>
<div class="a" style="left:20.5px;top:481px;width:32.5px;height:13.5px;border-radius:7px;background:#3c3c3e;box-shadow:0 0 0 .7px #2a2c30;color:#c6c6c6;font-weight:bold;font-size:9px;line-height:14px;text-align:center">dyn</div>
<svg class="a" style="left:57.5px;top:481px" width="14" height="14"><path d="M.4 .4L8 7L.4 13.6Z M5.6 3.2L13.4 7L5.6 10.8Z" fill="#9c9c9c"/></svg>
<div class="name" style="box-shadow:none;background:#2b2b2b">Sample 8</div>
<div class="dly"><i></i><span style="left:7px;top:3.7px">dly</span><span style="right:8px;top:3.7px">0</span><u style="top:15.5px"></u><span style="left:7px;top:16.7px">+/-</span><span style="right:8px;top:16.7px">0</span><u style="top:29.5px"></u><span style="left:7px;top:29.7px">cmp</span><span style="right:8px;top:29.7px">0</span><u style="top:43.5px"></u></div>
<div class="bl"></div></div>
<div class="a" style="left:631px;top:0;width:1px;height:661px;background:#000"></div>
<div class="a" style="left:0;top:0;width:712px;height:1px;background:#000;opacity:.75;z-index:4"></div>
</div>
<div class="menu m1" style="left:37px;top:502px;width:183px"><div style="padding-left:25.3px">Hide</div><div style="padding-left:25.3px">Hide and Make Inactive</div><div style="padding-left:25.3px">Make Inactive</div><div style="padding-left:25.3px">Scroll Into View</div><div class="ar" style="padding-left:25.3px">Move to...</div><div class="sp"></div><div style="padding-left:25.3px">Freeze</div><div style="padding-left:25.3px">Commit...</div><div style="padding-left:25.3px">Bounce...</div><div style="padding-left:25.3px">Extract MIDI to New Track</div><div class="sp"></div><div style="padding-left:25.3px">Save Track Preset...</div><div class="hl ar" style="padding-left:25.3px">Recall Track Preset</div><div class="sp"></div><div style="padding-left:25.3px">New...</div><div style="padding-left:25.3px">Rename...</div><div style="padding-left:25.3px">Batch Rename...</div><div style="padding-left:25.3px">Duplicate...</div><div style="padding-left:25.3px">Delete...</div><div class="sp"></div><div style="padding-left:25.3px">Field Recorder Guide Track</div></div>
<div class="menu m2" style="left:215px;top:711px;width:148px"><div class="ar" style="padding-left:25.3px">Avid</div><div class="hl ar" style="padding-left:25.3px">Marvel Universe</div><div class="ar" style="padding-left:25.3px">Mix Prep</div><div class="ar" style="padding-left:25.3px">Mix Ref</div><div class="ar" style="padding-left:25.3px">Pro Tools | Carbon</div><div class="ar" style="padding-left:25.3px">Rec Prep</div></div>
<div class="menu m3" style="left:358px;top:733px;width:118px"><div class="hl" style="padding-left:25.4px">H01 Thor</div><div style="padding-left:25.4px">H02 Loki</div><div style="padding-left:25.4px">H03 Batman</div><div style="padding-left:25.4px">H03-1 Mobile</div><div style="padding-left:25.4px">H03-2 Gun</div><div style="padding-left:25.4px">H03-2.1 Gun1</div><div style="padding-left:25.4px">H03-2.2 Gun2</div><div style="padding-left:25.4px">H04 Superman</div><div style="padding-left:25.4px">H05 Joker</div></div>
<div class="botline"></div></div></body></html>
